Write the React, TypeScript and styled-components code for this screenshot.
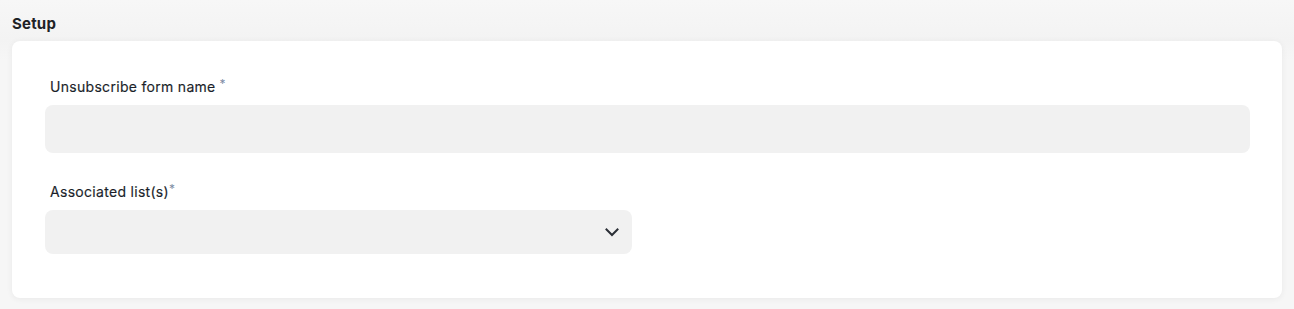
import React from "react";
import styled, { createGlobalStyle } from "styled-components";

const Global = createGlobalStyle`
  html, body { margin: 0; padding: 0; background: #f6f6f6; }
  body { font-family: Inter, "Noto Sans", sans-serif; color: #1f2226; }
`;

const Page = styled.div`
  width: 1294px;
  height: 309px;
  box-sizing: border-box;
  padding: 0 12px 0 12px;
  background: linear-gradient(to bottom, #f7f7f7 0px, #f3f3f3 40px, #f6f6f6 60px);
  display: flex;
  flex-direction: column;
`;

const Title = styled.h2`
  margin: 0;
  padding: 14px 0 0 0;
  height: 27px;
  box-sizing: border-box;
  font-size: 15px;
  font-weight: 700;
  letter-spacing: 0.2px;
  line-height: 19px;
  color: #1f2226;
`;

const Card = styled.div`
  background: #fff;
  border-radius: 8px;
  box-shadow: 0 1px 6px rgba(0, 0, 0, 0.06);
  margin-top: 14px;
  width: 1270px;
  box-sizing: border-box;
  padding: 34px 32px 44px 33px;
  display: flex;
  flex-direction: column;
  gap: 27px;
`;

const Field = styled.div`
  display: flex;
  flex-direction: column;
  gap: 9px;
`;

const Label = styled.label`
  padding-left: 5px;
  font-size: 14px;
  font-weight: 400;
  letter-spacing: 0.3px;
  line-height: 18px;
  color: #1b1f2a;
  -webkit-text-stroke: 0.15px #1b1f2a;
`;

const Req = styled.span<{ $gap: boolean }>`
  color: #7d8ca3;
  margin-left: ${(p) => (p.$gap ? "4px" : "0")};
  font-size: 12px;
  font-weight: 400;
  -webkit-text-stroke: 0;
  vertical-align: 4px;
`;

const Input = styled.div`
  height: 48px;
  background: #f1f1f1;
  border-radius: 8px;
`;

const Select = styled.div`
  width: 587px;
  height: 44px;
  background: #f1f1f1;
  border-radius: 8px;
  display: flex;
  align-items: center;
  justify-content: flex-end;
  padding-right: 12px;
  box-sizing: border-box;
`;

const Chevron = () => (
  <svg width="16" height="16" viewBox="0 0 16 16" fill="none">
    <path d="M2.5 5.5 L8 11 L13.5 5.5" stroke="#2b2f36" strokeWidth="2" strokeLinecap="square" />
  </svg>
);

export default function App() {
  return (
    <>
      <Global />
      <Page>
        <Title>Setup</Title>
        <Card>
          <Field>
            <Label>
              Unsubscribe form name<Req $gap>*</Req>
            </Label>
            <Input />
          </Field>
          <Field>
            <Label>
              Associated list(s)<Req $gap={false}>*</Req>
            </Label>
            <Select>
              <Chevron />
            </Select>
          </Field>
        </Card>
      </Page>
    </>
  );
}
